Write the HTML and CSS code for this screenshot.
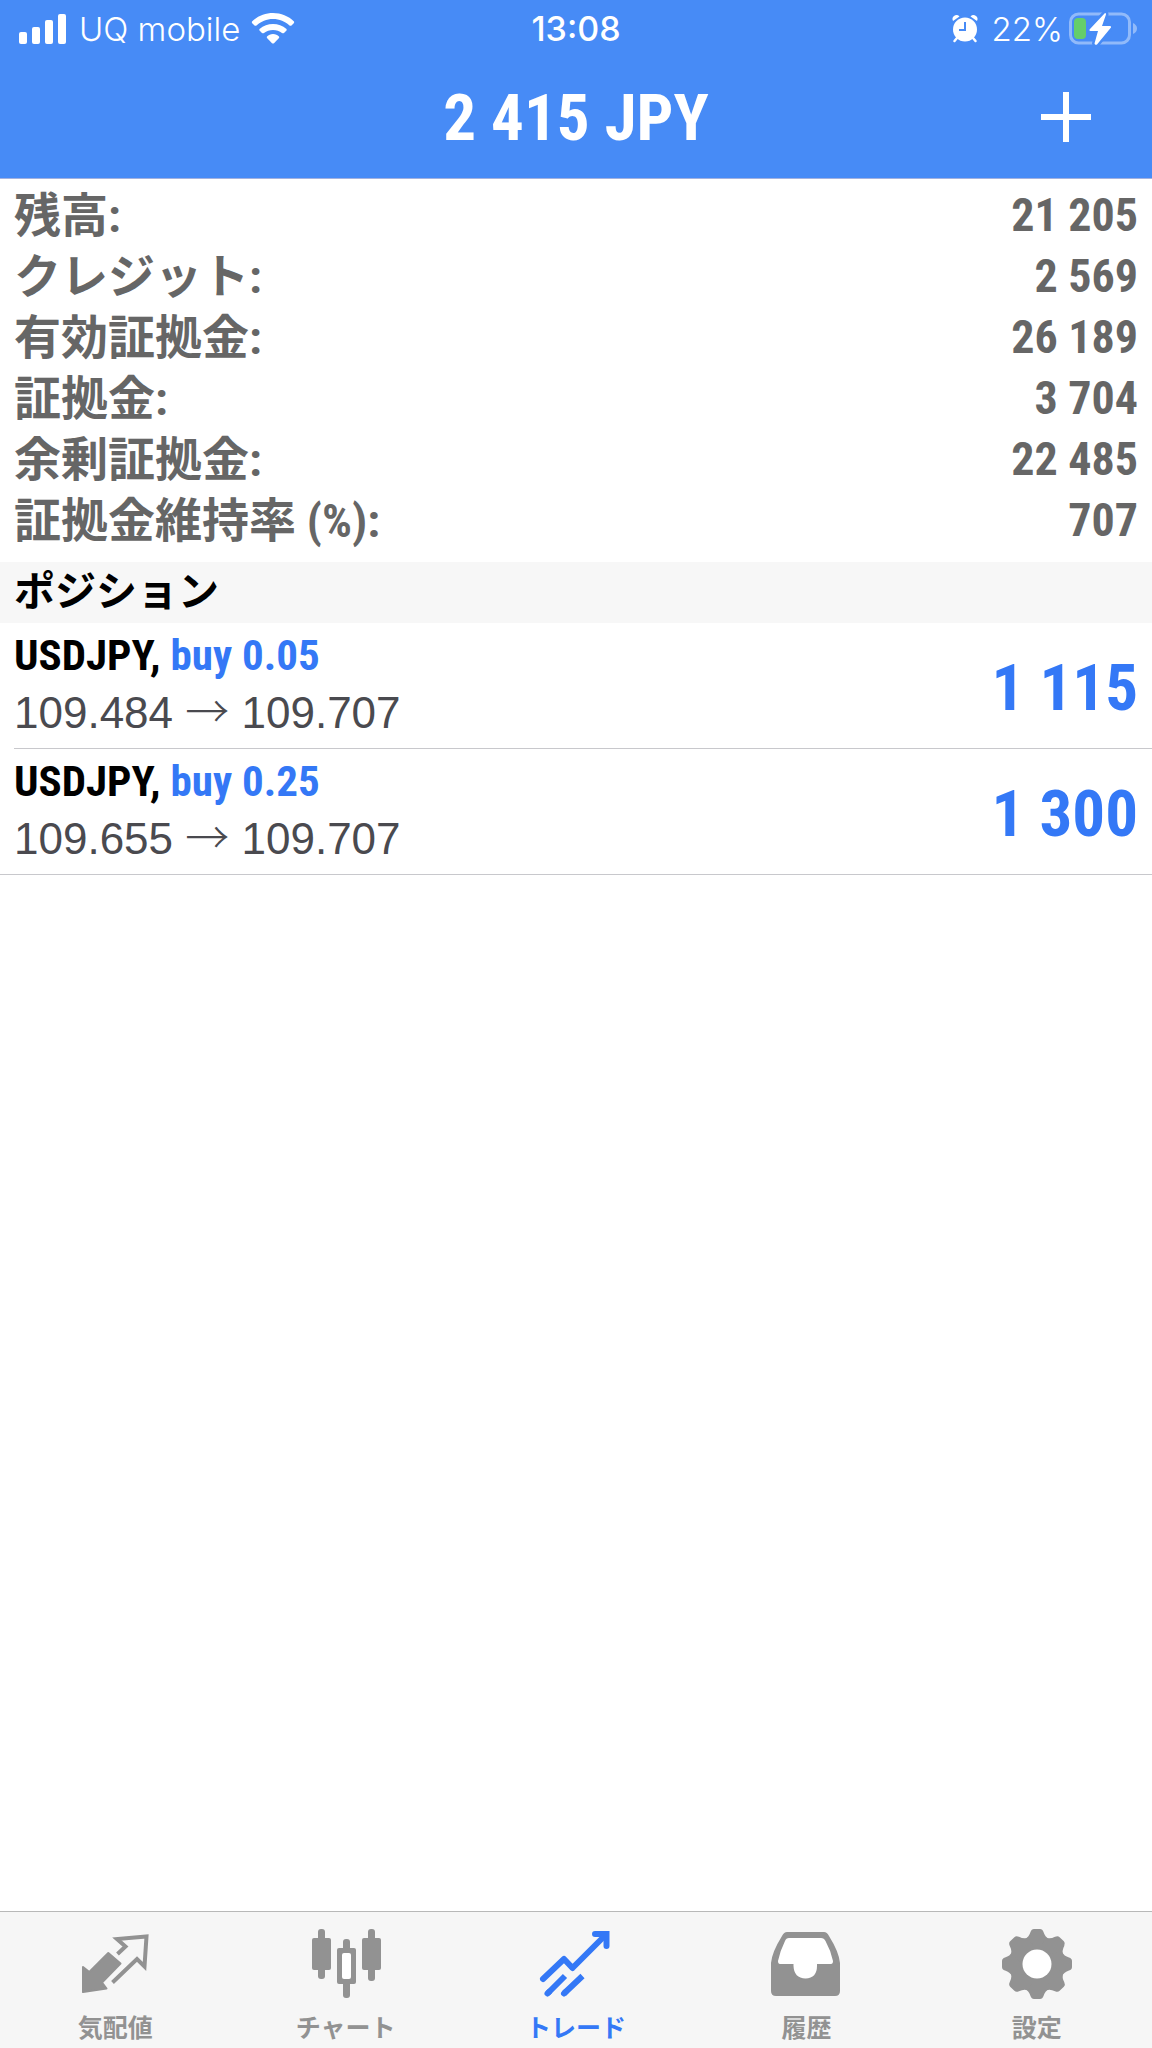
FILE: index.html
```html
<!DOCTYPE html>
<html lang="ja">
<head>
  <meta charset="UTF-8">
  <meta name="viewport" content="width=device-width, initial-scale=1.0">
  <title>トレード</title>
  <link rel="stylesheet" href="styles.css">
</head>
<body>
  <header class="header">
    <div class="status-bar">
      <div class="status-left">
        <svg class="signal" width="48" height="30" viewBox="0 0 48 30" fill="#fff">
          <rect x="0" y="18" width="8" height="12" rx="2"/>
          <rect x="13" y="13" width="8" height="17" rx="2"/>
          <rect x="26" y="6" width="8" height="24" rx="2"/>
          <rect x="39" y="0" width="8" height="30" rx="2"/>
        </svg>
        <span class="carrier">UQ mobile</span>
        <svg class="wifi" width="42" height="31" viewBox="0 0 42 31" fill="#fff">
          <path d="M21 0C29 0 36.500 3 42 8.500Q42.500 9.500 41.500 10.500L39.500 12.500Q38.500 13 37.500 12.500C33 8.500 27.500 6 21 6S9 8.500 4.500 12.500Q3.500 13 2.500 12.500L.5 10.500Q-.5 9.500 0 8.500C5.500 3 13 0 21 0Z"/>
          <path d="M21 11C26 11 30.500 12.500 34.500 16Q35 17 34.500 17.500L32 20Q31 20.500 30 20C27.500 18 24.500 17 21 17S14.500 18 12 20Q11 20.500 10 20L7.500 17.500Q7 17 7.500 16C11.500 12.500 16 11 21 11Z"/>
          <path d="M21 21C23.500 21 25.500 22 27 23.500Q27.500 24.200 27 25L22 30.200Q21 31 20 30.200L15 25Q14.500 24.200 15 23.500C16.500 22 18.500 21 21 21Z"/>
        </svg>
      </div>
      <time class="clock">13:08</time>
      <div class="status-right">
        <svg class="alarm" width="26" height="28" viewBox="0 0 26 28">
          <path d="M1 6Q-.5 3 2 1Q5 -1 7.500 1.500ZM25 6Q26.500 3 24 1Q21 -1 18.500 1.500Z" fill="#fff"/>
          <path d="M5 23L2.500 26M21 23L23.500 26" stroke="#fff" stroke-width="2.500" stroke-linecap="round"/>
          <circle cx="13" cy="14.500" r="12" fill="#fff"/>
          <path d="M13 7V15H7" fill="none" stroke="#478bf6" stroke-width="2"/>
        </svg>
        <span class="percent">22%</span>
        <svg class="battery" width="68" height="34" viewBox="0 0 68 34">
          <rect x="1.500" y="2" width="59" height="29" rx="8" fill="none" stroke="#91bafa" stroke-width="3"/>
          <path d="M64 11Q68 13 68 16.500T64 22Z" fill="#91bafa"/>
          <rect x="5" y="6" width="12" height="21" rx="4" fill="#65ce6b"/>
          <path d="M36 1L20.500 17.500Q20 19 21.500 19H29L25.500 31.500Q26 33.500 28 32.500L42 15.500Q42.500 14 41 14H33L37 2.500Q37 .5 36 1Z" fill="#fff" stroke="#478bf6" stroke-width="5" paint-order="stroke"/>
        </svg>
      </div>
    </div>
    <div class="title-bar">
      <h1>2 415 JPY</h1>
      <button class="add-btn" type="button" aria-label="追加">
        <svg width="52" height="52" viewBox="0 0 52 52" stroke="#fff" stroke-width="6">
          <path d="M26 0V50M1 25H51"/>
        </svg>
      </button>
    </div>
  </header>

  <main>
    <dl class="summary">
      <div class="summary-row"><dt>残高:</dt><dd>21 205</dd></div>
      <div class="summary-row"><dt>クレジット:</dt><dd>2 569</dd></div>
      <div class="summary-row"><dt>有効証拠金:</dt><dd>26 189</dd></div>
      <div class="summary-row"><dt>証拠金:</dt><dd>3 704</dd></div>
      <div class="summary-row"><dt>余剰証拠金:</dt><dd>22 485</dd></div>
      <div class="summary-row"><dt>証拠金維持率 (%):</dt><dd>707</dd></div>
    </dl>

    <h2 class="section-title">ポジション</h2>
    <ul class="positions">
      <li class="position">
        <div class="position-info">
          <div class="symbol">USDJPY, <span class="side">buy 0.05</span></div>
          <div class="prices">109.484 <span class="arrow">→</span> 109.707</div>
        </div>
        <div class="profit">1 115</div>
      </li>
      <li class="position">
        <div class="position-info">
          <div class="symbol">USDJPY, <span class="side">buy 0.25</span></div>
          <div class="prices">109.655 <span class="arrow">→</span> 109.707</div>
        </div>
        <div class="profit">1 300</div>
      </li>
    </ul>
  </main>

  <nav class="tab-bar">
    <a class="tab" href="#quotes">
      <svg width="70" height="70" viewBox="0 0 70 70">
        <path d="M3 38L9.300 43L28.300 24L40.500 34.500L22 53.500L26.500 59.500L3 63Z" fill="currentColor" stroke="currentColor" stroke-width="2" stroke-linejoin="round"/>
        <path d="M37.500 25L45.500 17.500L37 10L66.500 7.500L64.500 37.500L57 30L32.500 53.500" fill="none" stroke="currentColor" stroke-width="4"/>
      </svg>
      <span>気配値</span>
    </a>
    <a class="tab" href="#chart">
      <svg width="70" height="70" viewBox="0 0 70 70" fill="currentColor">
        <rect x="7" y="0" width="7" height="50" rx="3"/>
        <rect x="1" y="9" width="19" height="32" rx="2"/>
        <rect x="32" y="10" width="7" height="59" rx="3"/>
        <rect x="26" y="19" width="19" height="36" rx="2"/>
        <rect x="31" y="24" width="9" height="26" rx="2" fill="#fff"/>
        <rect x="57" y="0" width="7" height="52" rx="3"/>
        <rect x="51" y="9" width="19" height="32" rx="2"/>
      </svg>
      <span>チャート</span>
    </a>
    <a class="tab active" href="#trade">
      <svg width="70" height="70" viewBox="0 0 70 70" fill="none" stroke="currentColor" stroke-width="6">
        <path d="M2 50L23 30L31.500 39L64 6.500" stroke-linecap="round" stroke-linejoin="round"/>
        <path d="M54 5H65.500V17" stroke-linecap="round"/>
        <path d="M6.500 64.500L24 47M23 64.500L41.500 47"/>
        <path d="M6.500 64.500L8 63M23 64.500L24.500 63" stroke-linecap="round"/>
      </svg>
      <span>トレード</span>
    </a>
    <a class="tab" href="#history">
      <svg width="70" height="70" viewBox="0 0 70 70">
        <path d="M16 3H53Q56 3 58 7Q68 23 69 34V62Q69 67 64 67H5Q0 67 0 62V34Q1 23 11 7Q13 3 16 3Z" fill="currentColor"/>
        <path d="M18 9H50Q53 9 54.500 12Q60 22 62 32Q62 35 60 35H46V37Q46 49 34.500 49.500Q23 49 22.500 37V35H9Q7 35 7 32Q9 22 14 12Q15 9 18 9Z" fill="#fff"/>
      </svg>
      <span>履歴</span>
    </a>
    <a class="tab" href="#settings">
      <svg width="70" height="70" viewBox="0 0 70 70" fill="currentColor">
        <defs>
          <path id="tooth" d="M23 10Q27 8 28.500 3Q29.500 0 32 0H38Q40.500 0 41.500 3Q43 8 47 10L45 22H25Z"/>
        </defs>
        <circle cx="35" cy="35" r="27"/>
        <use href="#tooth"/>
        <use href="#tooth" transform="rotate(45 35 35)"/>
        <use href="#tooth" transform="rotate(90 35 35)"/>
        <use href="#tooth" transform="rotate(135 35 35)"/>
        <use href="#tooth" transform="rotate(180 35 35)"/>
        <use href="#tooth" transform="rotate(225 35 35)"/>
        <use href="#tooth" transform="rotate(270 35 35)"/>
        <use href="#tooth" transform="rotate(315 35 35)"/>
        <circle cx="35" cy="35" r="14.500" fill="#fff"/>
      </svg>
      <span>設定</span>
    </a>
  </nav>
</body>
</html>
```

FILE: styles.css
```css
* {
  box-sizing: border-box;
  margin: 0;
  padding: 0;
}
body {
  display: flex;
  flex-direction: column;
  min-height: 100vh;
  background-color: #fff;
  color: #000;
  font-family: "Roboto Condensed", "Arial Narrow", "Noto Sans CJK JP", sans-serif;
}
svg {
  display: block;
  flex-shrink: 0;
  overflow: visible;
}
main {
  flex: 1;
}

/* Header */
.header {
  background-color: #478bf6;
  border-bottom: 1px solid #a3b1df;
  color: #fff;
}
.status-bar {
  display: grid;
  grid-template-columns: 1fr auto 1fr;
  align-items: center;
  height: 57px;
  padding: 0 15px;
  font-family: Inter, "Liberation Sans", sans-serif;
  font-size: 33px;
}
.status-left,
.status-right {
  display: flex;
  align-items: center;
}
.status-left {
  gap: 12px;
  padding-left: 4px;
}
.status-right {
  justify-content: flex-end;
}
.carrier,
.percent {
  font-weight: 300;
}
.percent {
  margin: 0 6px 0 14px;
}
.clock {
  font-size: 34px;
  font-weight: 500;
}
.title-bar {
  display: grid;
  grid-template-columns: 1fr auto 1fr;
  align-items: center;
  height: 121px;
  padding: 0 60px;
}
h1 {
  grid-column: 2;
  font-size: 65px;
  line-height: 80px;
}
.add-btn {
  justify-self: end;
  background: none;
  border: none;
  cursor: pointer;
}

/* Account summary */
.summary {
  padding: 6px 14px 11px;
  color: #666;
  font-size: 47px;
  font-weight: bold;
  line-height: 61px;
}
.summary-row {
  display: flex;
  justify-content: space-between;
  height: 61px;
}
.summary-row dd {
  font-size: 46px;
}

/* Positions */
.section-title {
  padding: 0 14px;
  background-color: #f7f7f7;
  font-size: 41px;
  line-height: 61px;
}
.positions {
  list-style: none;
  border-bottom: 1px solid #c8c8cc;
}
.position {
  display: flex;
  align-items: center;
  justify-content: space-between;
  height: 125px;
  margin-left: 14px;
  padding-right: 14px;
}
.position + .position {
  height: 126px;
  border-top: 1px solid #c8c8cc;
}
.position-info {
  padding-bottom: 3px;
}
.symbol {
  font-size: 43px;
  font-weight: bold;
  line-height: 58px;
}
.side,
.profit {
  color: #3478f6;
}
.prices {
  color: #4a4a4f;
  font-family: "Liberation Sans", Arial, sans-serif;
  font-size: 44px;
  line-height: 58px;
}
.arrow {
  font-family: "Noto Sans CJK JP", sans-serif;
  font-weight: 300;
  line-height: 1;
}
.profit {
  padding-top: 4px;
  font-size: 65px;
  font-weight: bold;
}

/* Tab bar */
.tab-bar {
  display: flex;
  height: 137px;
  background-color: #f6f6f6;
  border-top: 1px solid #b8b8b8;
}
.tab {
  flex: 1;
  display: flex;
  flex-direction: column;
  align-items: center;
  gap: 9px;
  padding-top: 17px;
  color: #929292;
  font-family: "Noto Sans CJK JP", sans-serif;
  font-size: 25px;
  font-weight: bold;
  line-height: 36px;
  text-decoration: none;
}
.tab.active {
  color: #3478f6;
}
```
